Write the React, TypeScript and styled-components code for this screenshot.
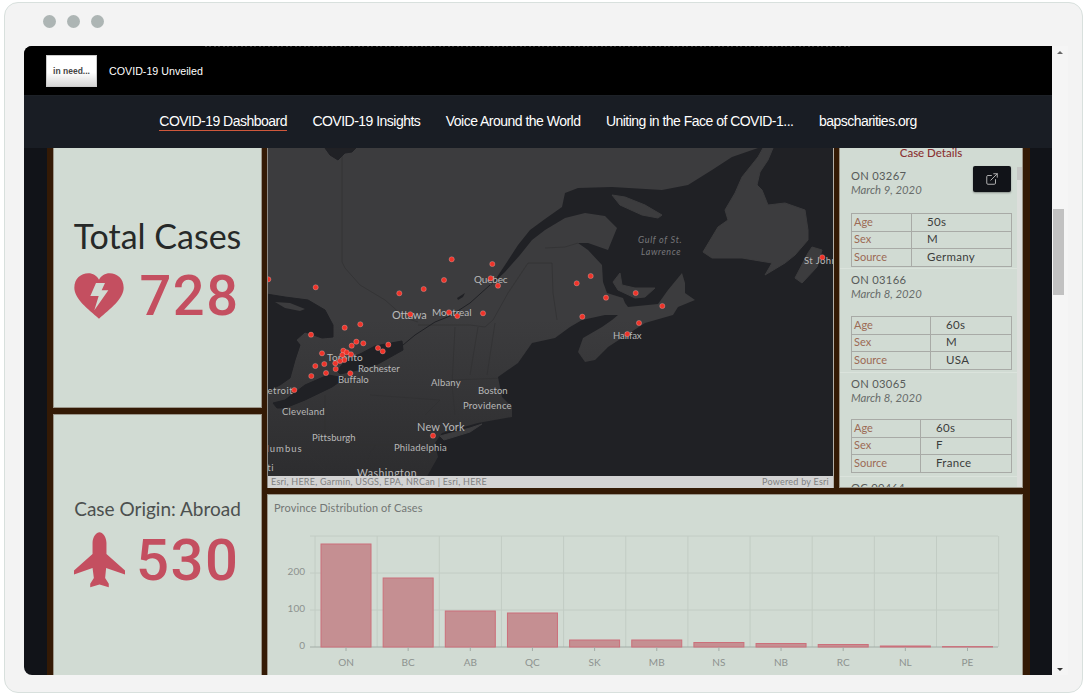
import React from "react";
import styled, { createGlobalStyle } from "styled-components";
import { ExternalLink } from "lucide-react";

const GlobalStyle = createGlobalStyle`
  html, body { margin: 0; padding: 0; background: #fff; }
  * { box-sizing: border-box; }
`;

const Frame = styled.div`
  margin: 2px 0 0 4px;
  width: 1079px;
  height: 691px;
  background: #f3f3f3;
  border: 1px solid #d8e0dd;
  border-radius: 14px;
  padding: 0 0 0 19px;
  display: flex;
  flex-direction: column;
`;
const Dots = styled.div`
  height: 43px;
  padding: 12px 0 0 19px;
  display: flex;
  gap: 11px;
`;
const Dot = styled.span`
  width: 13px;
  height: 13px;
  border-radius: 50%;
  background: #adb5b4;
`;
const Screen = styled.div`
  display: flex;
  height: 629px;
`;
const Viewport = styled.div`
  width: 1028px;
  display: flex;
  flex-direction: column;
  overflow: hidden;
  border-radius: 8px 0 0 8px;
  background: #111318;
`;
const Scrollbar = styled.div`
  width: 16px;
  background: #f5f5f5;
  display: flex;
  flex-direction: column;
  align-items: center;
  justify-content: space-between;
  padding: 5px 0 4px;
  position: relative;
`;
const Arrow = styled.span<{ $down?: boolean }>`
  width: 0;
  height: 0;
  border-left: 3px solid transparent;
  border-right: 3px solid transparent;
  ${(p) => (p.$down ? "border-top: 3px solid #333;" : "border-bottom: 3px solid #666;")}
`;
const Thumb = styled.span`
  position: absolute;
  left: 1px;
  top: 163px;
  width: 11px;
  height: 86px;
  background: #c1c1c1;
`;
const Header = styled.header`
  height: 50px;
  background: #000;
  border-bottom: 1px solid #1d2127;
  display: flex;
  flex-direction: column;
  flex-shrink: 0;
`;
const Specks = styled.div`
  height: 1px;
  margin: 0 200px 0 181px;
  background: repeating-linear-gradient(90deg, #3a3a3a 0 2px, #000 2px 4px, #333 4px 6px, #000 6px 9px);
`;
const Brand = styled.div`
  display: flex;
  align-items: center;
  padding: 8px 0 0 22px;
  gap: 12px;
`;
const Logo = styled.div`
  width: 51px;
  height: 32px;
  background: linear-gradient(180deg, #fff 55%, #d6d6d6 100%);
  border: 1px solid #ccc;
  display: flex;
  align-items: center;
  justify-content: center;
  font: bold 8.5px "Liberation Sans", sans-serif;
  color: #444;
`;
const SiteName = styled.span`
  font: 10.7px "Liberation Sans", sans-serif;
  color: #fff;
`;
const Nav = styled.nav`
  height: 52px;
  background: #191d24;
  display: flex;
  justify-content: center;
  align-items: center;
  gap: 25.5px;
  flex-shrink: 0;
  font: 14px/15px "Liberation Sans", sans-serif;
  letter-spacing: -0.52px;
  color: #fff;
`;
const NavItem = styled.a<{ $active?: boolean }>`
  padding-bottom: 1px;
  border-bottom: 1px solid ${(p) => (p.$active ? "#d0583c" : "transparent")};
  white-space: nowrap;
`;
const Board = styled.main`
  margin: 0 22px 0 23px;
  flex: 1;
  min-height: 0;
  background: #341a05;
  padding: 0 7px 0 6px;
  display: flex;
  gap: 5px;
  overflow: hidden;
`;
const LeftCol = styled.div`
  width: 209px;
  display: flex;
  flex-direction: column;
  gap: 6px;
  flex-shrink: 0;
`;
const Stat = styled.section<{ $height: number; $pad: number; $gap: number }>`
  height: ${(p) => p.$height}px;
  flex-shrink: 0;
  background: #d1dbd3;
  border: 1px solid #9c978b;
  border-top-width: ${(p) => (p.$height === 260 ? 0 : 1)}px;
  padding-top: ${(p) => p.$pad}px;
  display: flex;
  flex-direction: column;
  align-items: center;
  gap: ${(p) => p.$gap}px;
  font-family: Lato, sans-serif;
`;
const StatTitle = styled.h2<{ $size: number; $color: string }>`
  margin: 0;
  font-weight: 400;
  font-size: ${(p) => p.$size}px;
  line-height: 1.2;
  color: ${(p) => p.$color};
  white-space: nowrap;
`;
const StatRow = styled.div`
  width: 166px;
  margin-left: -2px;
  display: flex;
  justify-content: space-between;
  align-items: center;
`;
const StatNumber = styled.span<{ $size: number }>`
  font: 500 ${(p) => p.$size}px/1 Roboto, sans-serif;
  letter-spacing: 1.5px;
  color: #c44f60;
`;
const RightCol = styled.div`
  flex: 1;
  min-width: 0;
  display: flex;
  flex-direction: column;
  gap: 6px;
`;
const TopRow = styled.div`
  height: 340px;
  flex-shrink: 0;
  display: flex;
  gap: 5px;
`;
const MapPanel = styled.section`
  width: 567px;
  flex-shrink: 0;
  display: flex;
  flex-direction: column;
  border-left: 1px solid #8d8a85;
  border-right: 1px solid #b4b0a8;
  background: #3c3c3e;
`;
const MapSvg = styled.svg`
  display: block;
  width: 565px;
  height: 328px;
`;
const Attribution = styled.footer`
  height: 12px;
  background: #d3d3d3;
  color: #808080;
  font: 9px/12px Lato, sans-serif;
  letter-spacing: 0.25px;
  display: flex;
  justify-content: space-between;
  padding: 0 4px 0 3px;
`;
const Details = styled.section`
  flex: 1;
  min-width: 0;
  position: relative;
  background: #d1dbd3;
  border: 1px solid #9c978b;
  border-top: 0;
  display: flex;
  flex-direction: column;
  font-family: Lato, sans-serif;
`;
const DetailsTitle = styled.h3`
  margin: 0;
  height: 17px;
  text-align: center;
  font: 500 11.5px/10px Lato, sans-serif;
  color: #8a3232;
`;
const DetailsBody = styled.div`
  flex: 1;
  min-height: 0;
  display: flex;
`;
const CaseList = styled.div`
  width: 178px;
  overflow: hidden;
`;
const CaseItem = styled.article`
  height: 104px;
  padding: 4px 0 0 11px;
  border-bottom: 1px solid #dbe3dc;
`;
const CaseId = styled.div`
  font-size: 11.2px;
  line-height: 14px;
  letter-spacing: 0.3px;
  color: #585b5a;
`;
const CaseDate = styled.div`
  font-size: 11.3px;
  line-height: 14px;
  font-style: italic;
  color: #686c6a;
`;
const CaseTable = styled.table<{ $top: number }>`
  width: 161px;
  margin-top: ${(p) => p.$top}px;
  border-collapse: collapse;
  table-layout: fixed;
  font-size: 11px;
  line-height: 13px;
  & td {
    height: 17.6px;
    padding: 0 0 2px 2px;
    border: 1px solid #a8aaa6;
  }
`;
const LabelCell = styled.td<{ $width: number }>`
  width: ${(p) => p.$width}px;
  color: #9c6a55;
`;
const ValueCell = styled.td`
  && { padding-left: 15px; }
  font-size: 11.5px;
  letter-spacing: 0.3px;
  color: #3b3d3c;
`;
const InnerTrack = styled.div`
  width: 5px;
  margin-top: 2px;
  background: #dcdedb;
`;
const InnerThumb = styled.div`
  height: 13px;
  background: #c6c7c5;
`;
const PopOut = styled.button`
  position: absolute;
  top: 18px;
  right: 11px;
  width: 38px;
  height: 26px;
  border: 0;
  border-radius: 2px;
  background: #111318;
  color: #b0b0b0;
  box-shadow: 0 1px 2px rgba(0, 0, 0, 0.35);
  display: flex;
  align-items: center;
  justify-content: center;
  padding: 0;
`;
const ChartPanel = styled.section`
  flex: 1;
  min-height: 0;
  background: #d1dbd3;
  border: 1px solid #9c978b;
  border-bottom: 0;
  overflow: hidden;
`;
const ChartTitle = styled.h3`
  margin: 0;
  height: 29px;
  padding: 6px 0 0 6px;
  font: 400 11px/14px Lato, sans-serif;
  letter-spacing: 0.1px;
  color: #737775;
`;
const ChartSvg = styled.svg`
  display: block;
  width: 754px;
  height: 150px;
`;
const MapLabel = styled.text<{ $muted?: boolean }>`
  fill: ${(p) => (p.$muted ? "#77777a" : "#b9b9b9")};
  font-family: Lato, sans-serif;
  font-style: ${(p) => (p.$muted ? "italic" : "normal")};
  letter-spacing: 0.4px;
`;
const AxisLabel = styled.text`
  fill: #8d928f;
  font: 10px Lato, sans-serif;
`;

const WATER = "#202125";
const LAND = "#3c3c3e";
const LINE = "#303032";

const gulf =
  "758,148 1000,148 1000,480 425,480 438,457 435,443 442,433 478,423 512,417 512,407 502,397 498,377 518,363 532,343 555,338 570,327 582,320 605,315 618,315 612,320 602,327 583,338 578,352 585,362 595,360 608,347 645,323 673,315 678,307 695,300 685,293 685,283 682,273 668,290 658,304 628,307 625,303 623,298 607,293 603,282 602,265 588,250 578,243 588,243 608,250 617,228 605,216 585,213 565,218 545,230 532,240 520,255 505,272 490,286 497,277 507,262 518,245 530,230 545,219 562,207 565,193 578,188 612,187 662,190 688,185 712,170 732,157";
const anticosti = "612,195 625,197 645,205 662,215 658,218 642,215 620,205";
const pei = "613,282 620,273 622,285 635,288 655,288 645,297 635,298 618,290";
const newfoundland =
  "773,148 768,160 760,172 757,185 762,190 768,205 785,203 805,210 808,230 808,240 795,255 785,263 765,275 772,263 742,258 712,258 703,252 718,227 728,220 725,210 735,193 742,177 758,157 763,148";
const avalon = "812,247 822,250 817,267 802,283 795,278 808,253";
const longIsland = "440,436 470,428 482,424 470,432 444,440";
const ontario = "337,371 345,361 362,353 375,346 402,341 403,350 378,364 362,369 340,374";
const erie = "273,403 285,400 305,385 328,375 345,378 332,387 305,400 285,408 277,408";
const huron =
  "260,293 285,297 308,300 325,310 333,325 333,337 322,338 305,332 296,340 300,345 295,360 290,378 280,385 260,395";
const manitoulin = "275,302 290,303 305,309 300,311 285,308";
const james = "325,148 356,148 352,152 345,153 338,160 330,155";
const borders = [
  "342,148 342,262 345,268 360,285 385,300 393,307 405,318 418,322",
  "418,325 470,325 485,327 493,320 508,293 528,263 552,263 553,293 557,320",
  "545,248 565,247 578,243",
  "455,327 452,385 455,415",
  "478,327 470,375",
  "495,323 487,375",
  "452,380 505,378",
  "370,395 440,400 425,415",
  "325,395 325,445 420,445",
  "358,476 375,445",
  "300,445 325,470",
  "420,445 425,465",
];

const markers: [number, number][] = [
  [451.7, 259.3], [492.3, 264], [490.7, 278.3], [498, 285.7], [444, 280], [423.7, 289], [399.3, 293.3],
  [315.7, 287.3], [268.3, 279.3], [410.3, 314.3], [449, 312.3], [457.3, 316], [483, 313.3], [344.7, 327.7],
  [360.3, 324.3], [311, 334.7], [356.3, 341.7], [363.3, 343.3], [351.7, 345.7], [343.3, 350.7], [346.7, 352.3],
  [351, 354.3], [342.3, 355], [344.3, 360], [340, 361], [335.3, 363.3], [322, 353.3], [324.3, 364], [315.3, 366],
  [335.7, 369], [326, 373], [311.3, 376], [350.3, 373.3], [378, 348], [382.7, 351.3], [388.3, 344.7], [294.3, 390],
  [433, 435.7], [576.7, 283.3], [590.7, 276], [606, 297.7], [582.3, 316.7], [635.7, 293], [662.3, 306], [639, 323],
  [627.3, 334], [822.3, 257.3],
];

const labels: { t: string; x: number; y: number; s: number; w: number }[] = [
  { t: "Quebec", x: 474, y: 283, s: 10, w: 34 },
  { t: "Ottawa", x: 392, y: 319, s: 11, w: 35 },
  { t: "Montreal", x: 432, y: 316, s: 10, w: 40 },
  { t: "Toronto", x: 327, y: 361, s: 10, w: 36 },
  { t: "Rochester", x: 358, y: 372, s: 9.5, w: 42 },
  { t: "Buffalo", x: 338, y: 383, s: 9.5, w: 31 },
  { t: "Albany", x: 431, y: 386, s: 9.5, w: 30 },
  { t: "Boston", x: 478, y: 394, s: 9.5, w: 30 },
  { t: "Providence", x: 463, y: 409, s: 9.5, w: 49 },
  { t: "New York", x: 417, y: 431, s: 11, w: 48 },
  { t: "Cleveland", x: 282, y: 415, s: 9.5, w: 43 },
  { t: "Pittsburgh", x: 312, y: 441, s: 9.5, w: 44 },
  { t: "Philadelphia", x: 394, y: 451, s: 9.5, w: 53 },
  { t: "Columbus", x: 253, y: 452, s: 9.5, w: 49 },
  { t: "Cincinnati", x: 227, y: 471, s: 9.5, w: 47 },
  { t: "Washington", x: 357, y: 477, s: 10.5, w: 60 },
  { t: "Detroit", x: 260, y: 394, s: 9.5, w: 33 },
  { t: "Halifax", x: 613, y: 339, s: 9.5, w: 29 },
  { t: "St John's", x: 804, y: 264, s: 9.5, w: 40 },
];

const cases = [
  { id: "ON 03267", date: "March 9, 2020", w: 60, top: 16, age: "50s", sex: "M", src: "Germany" },
  { id: "ON 03166", date: "March 8, 2020", w: 79, top: 15, age: "60s", sex: "M", src: "USA" },
  { id: "ON 03065", date: "March 8, 2020", w: 69, top: 14, age: "60s", sex: "F", src: "France" },
  { id: "QC 00464", date: "March 8, 2020", w: 69, top: 14, age: "60s", sex: "M", src: "Iran" },
];

const bars: [string, number][] = [
  ["ON", 545], ["BC", 579], ["AB", 612], ["QC", 614], ["SK", 641], ["MB", 641],
  ["NS", 643.5], ["NB", 644.5], ["RC", 645.5], ["NL", 647], ["PE", 647.6],
];
const colX = (i: number) => 315 + i * 62.15;

const HeartIcon = () => (
  <svg width="50" height="46" viewBox="130 368 148 138" aria-hidden="true">
    <path
      fill="#c44f60"
      d="M204 505C170 475 130 445 130 412C130 385 150 369 172 369C186 369 198 377 204 388C210 377 222 369 236 369C258 369 278 385 278 412C278 445 238 475 204 505Z"
    />
    <path fill="#d1dbd3" d="M195 398L222 398L212 420L232 420L190 480L203 437L178 437Z" />
  </svg>
);

const PlaneIcon = () => (
  <svg width="51" height="56" viewBox="128 362 154 168" aria-hidden="true">
    <path
      fill="#c44f60"
      d="M205 362C214 362 226 375 226 395L226 428L282 478L282 490L225 470L222 500L233 518L233 528L205 520L177 528L177 518L188 500L184 470L128 490L128 478L184 428L184 395C184 375 196 362 205 362Z"
    />
  </svg>
);

const NavLinks = ["COVID-19 Dashboard", "COVID-19 Insights", "Voice Around the World", "Uniting in the Face of COVID-1...", "bapscharities.org"];

export default function App() {
  return (
    <>
      <GlobalStyle />
      <Frame>
        <Dots>
          <Dot />
          <Dot />
          <Dot />
        </Dots>
        <Screen>
          <Viewport>
            <Header>
              <Specks />
              <Brand>
                <Logo>in need...</Logo>
                <SiteName>COVID-19 Unveiled</SiteName>
              </Brand>
            </Header>
            <Nav>
              {NavLinks.map((l, i) => (
                <NavItem key={l} $active={i === 0}>
                  {l}
                </NavItem>
              ))}
            </Nav>
            <Board>
              <LeftCol>
                <Stat $height={260} $pad={68} $gap={11}>
                  <StatTitle $size={34} $color="#262928">Total Cases</StatTitle>
                  <StatRow>
                    <HeartIcon />
                    <StatNumber $size={56}>728</StatNumber>
                  </StatRow>
                </Stat>
                <Stat $height={300} $pad={83} $gap={10}>
                  <StatTitle $size={19} $color="#4c504f">Case Origin: Abroad</StatTitle>
                  <StatRow>
                    <PlaneIcon />
                    <StatNumber $size={58}>530</StatNumber>
                  </StatRow>
                </Stat>
              </LeftCol>
              <RightCol>
                <TopRow>
                  <MapPanel>
                    <MapSvg viewBox="268 148 565 328">
                      <defs>
                        <linearGradient id="landShade" gradientUnits="userSpaceOnUse" x1="0" y1="320" x2="0" y2="476">
                          <stop offset="0" stopColor={LAND} />
                          <stop offset="1" stopColor="#2d2d2f" />
                        </linearGradient>
                      </defs>
                      <rect x="268" y="148" width="565" height="328" fill="url(#landShade)" />
                      {borders.map((b) => (
                        <polyline key={b} points={b} fill="none" stroke={LINE} strokeWidth="1" opacity="0.7" />
                      ))}
                      <polygon points={gulf} fill={WATER} />
                      {[anticosti, pei, newfoundland, avalon, longIsland].map((p) => (
                        <polygon key={p} points={p} fill={LAND} stroke={LAND} strokeWidth="1" strokeLinejoin="round" />
                      ))}
                      {[ontario, erie, huron, james].map((p) => (
                        <polygon key={p} points={p} fill={WATER} stroke={WATER} strokeWidth="1" strokeLinejoin="round" />
                      ))}
                      <polygon points={manitoulin} fill={LAND} />
                      <polygon points="457,298 465,293 463,297 458,300" fill={WATER} />
                      <polyline points="403,345 415,335 435,322 450,316 470,303 490,285" fill="none" stroke={WATER} strokeWidth="1" />
                      {labels.map((l) => (
                        <MapLabel key={l.t} x={l.x} y={l.y} fontSize={l.s} textLength={l.w}>
                          {l.t}
                        </MapLabel>
                      ))}
                      <MapLabel $muted x="638" y="243" fontSize="9" textLength="44">
                        Gulf of St.
                      </MapLabel>
                      <MapLabel $muted x="641" y="255" fontSize="9" textLength="40">
                        Lawrence
                      </MapLabel>
                      {markers.map(([x, y]) => (
                        <circle key={`${x}-${y}`} cx={x} cy={y} r="2.6" fill="#ee342a" stroke="#ffffff" strokeOpacity="0.45" strokeWidth="0.5" />
                      ))}
                    </MapSvg>
                    <Attribution>
                      <span>Esri, HERE, Garmin, USGS, EPA, NRCan | Esri, HERE</span>
                      <span>Powered by Esri</span>
                    </Attribution>
                  </MapPanel>
                  <Details>
                    <DetailsTitle>Case Details</DetailsTitle>
                    <DetailsBody>
                      <CaseList>
                        {cases.map((c) => (
                          <CaseItem key={c.id}>
                            <CaseId>{c.id}</CaseId>
                            <CaseDate>{c.date}</CaseDate>
                            <CaseTable $top={c.top}>
                              <tbody>
                                <tr>
                                  <LabelCell $width={c.w}>Age</LabelCell>
                                  <ValueCell>{c.age}</ValueCell>
                                </tr>
                                <tr>
                                  <LabelCell $width={c.w}>Sex</LabelCell>
                                  <ValueCell>{c.sex}</ValueCell>
                                </tr>
                                <tr>
                                  <LabelCell $width={c.w}>Source</LabelCell>
                                  <ValueCell>{c.src}</ValueCell>
                                </tr>
                              </tbody>
                            </CaseTable>
                          </CaseItem>
                        ))}
                      </CaseList>
                      <InnerTrack>
                        <InnerThumb />
                      </InnerTrack>
                    </DetailsBody>
                    <PopOut aria-label="Open">
                      <ExternalLink size={14} strokeWidth={1.7} />
                    </PopOut>
                  </Details>
                </TopRow>
                <ChartPanel>
                  <ChartTitle>Province Distribution of Cases</ChartTitle>
                  <ChartSvg viewBox="268 525 754 150">
                    {Array.from({ length: 12 }, (_, i) => (
                      <line key={i} x1={colX(i)} x2={colX(i)} y1="537" y2="648" stroke="#c2ccc4" strokeWidth="1" />
                    ))}
                    {[537, 574, 611].map((y) => (
                      <line key={y} x1="310" x2="998" y1={y} y2={y} stroke="#c2ccc4" strokeWidth="1" />
                    ))}
                    <line x1="310" x2="998" y1="648" y2="648" stroke="#a3aca6" strokeWidth="1" />
                    {bars.map(([name, top], i) => (
                      <g key={name}>
                        <rect
                          x={colX(i) + 6}
                          y={top}
                          width="50"
                          height={648 - top}
                          fill="#c58f92"
                          stroke="#cc6f7a"
                          strokeWidth="1"
                        />
                        <line x1={colX(i) + 31} x2={colX(i) + 31} y1="648" y2="652" stroke="#a3aca6" />
                        <AxisLabel x={colX(i) + 31} y="667" textAnchor="middle">
                          {name}
                        </AxisLabel>
                      </g>
                    ))}
                    <AxisLabel x="305" y="576" textAnchor="end">200</AxisLabel>
                    <AxisLabel x="305" y="613" textAnchor="end">100</AxisLabel>
                    <AxisLabel x="305" y="650" textAnchor="end">0</AxisLabel>
                  </ChartSvg>
                </ChartPanel>
              </RightCol>
            </Board>
          </Viewport>
          <Scrollbar>
            <Arrow />
            <Thumb />
            <Arrow $down />
          </Scrollbar>
        </Screen>
      </Frame>
    </>
  );
}
